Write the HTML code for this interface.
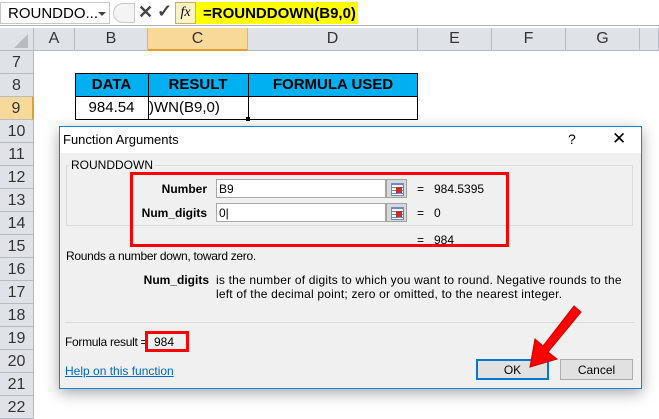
<!DOCTYPE html>
<html><head><meta charset="utf-8"><style>
*{margin:0;padding:0;box-sizing:border-box}
body{width:659px;height:419px;overflow:hidden;background:#fff;font-family:"Liberation Sans",sans-serif;position:relative}
.a{position:absolute}
.hdr{background:#dfe3e8;border-right:1px solid #b7bcc2;border-bottom:1px solid #b7bcc2;color:#333;font-size:16px;text-align:center}
.t{font-size:12px;color:#000;white-space:nowrap}
.ib{background:#fff;border:1px solid #a8a8a8}
.pk{background:#d8d8d8;border:1px solid #a0a0a0}
.pk:after{content:"";position:absolute;left:4px;top:3px;width:11px;height:11px;background:repeating-linear-gradient(#6a8cc0 0 1px,#fff 1px 3px);border:1px solid #6a8cc0}
.pk:before{content:"";position:absolute;left:9px;top:7px;width:6px;height:6px;background:#d03020;z-index:1}
</style></head><body>
<div class="a" style="left:0;top:0;width:659px;height:26px;background:#fff;border-bottom:1px solid #b0b0b0"></div>
<div class="a" style="left:0;top:2px;width:110px;height:22px;border:1px solid #c8c8c8;font-size:15px;padding:2px 0 0 7px">ROUNDDO...</div>
<div class="a" style="left:98px;top:12px;width:0;height:0;border-left:4px solid transparent;border-right:4px solid transparent;border-top:4px solid #444"></div>
<div class="a" style="left:113px;top:3px;width:22px;height:20px;border:1px solid #c8c8c8;border-radius:10px 0 0 10px;background:#f4f4f4"></div>
<div class="a" style="left:138px;top:2px;font-size:18px;color:#444;font-weight:bold">✕</div>
<div class="a" style="left:157px;top:1px;font-size:18px;color:#444;font-weight:bold">✓</div>
<div class="a" style="left:175px;top:2px;width:21px;height:22px;background:#fbf3c6;border:1px solid #c8b060;font-family:'Liberation Serif',serif;font-style:italic;font-size:14px;text-align:center;line-height:20px">fx</div>
<div class="a" style="left:196px;top:2px;width:162px;height:22px;background:#ffff00;font-size:15px;font-weight:bold;padding:3px 0 0 7px;white-space:nowrap">=ROUNDDOWN(B9,0)</div>
<div class="a hdr" style="left:0;top:28px;width:34px;height:23px"></div>
<div class="a" style="left:14px;top:34px;width:0;height:0;border-left:14px solid transparent;border-bottom:14px solid #b8bcc0"></div>
<div class="a hdr" style="left:34px;top:28px;width:41px;height:23px;line-height:22px">A</div>
<div class="a hdr" style="left:75px;top:28px;width:73px;height:23px;line-height:22px">B</div>
<div class="a hdr" style="left:148px;top:28px;width:100px;height:23px;line-height:22px;background:#f9d99a;border-bottom:2px solid #e0a030">C</div>
<div class="a hdr" style="left:248px;top:28px;width:170px;height:23px;line-height:22px">D</div>
<div class="a hdr" style="left:418px;top:28px;width:74px;height:23px;line-height:22px">E</div>
<div class="a hdr" style="left:492px;top:28px;width:74px;height:23px;line-height:22px">F</div>
<div class="a hdr" style="left:566px;top:28px;width:74px;height:23px;line-height:22px">G</div>
<div class="a hdr" style="left:640px;top:28px;width:19px;height:23px"></div>
<div class="a hdr" style="left:0;top:51px;width:34px;height:23px;line-height:23px">7</div>
<div class="a hdr" style="left:0;top:74px;width:34px;height:23px;line-height:23px">8</div>
<div class="a hdr" style="left:0;top:97px;width:34px;height:23px;line-height:23px;background:#f9d99a;border-right:2px solid #e0a030">9</div>
<div class="a hdr" style="left:0;top:120px;width:34px;height:23px;line-height:23px">10</div>
<div class="a hdr" style="left:0;top:143px;width:34px;height:23px;line-height:23px">11</div>
<div class="a hdr" style="left:0;top:166px;width:34px;height:23px;line-height:23px">12</div>
<div class="a hdr" style="left:0;top:189px;width:34px;height:23px;line-height:23px">13</div>
<div class="a hdr" style="left:0;top:212px;width:34px;height:23px;line-height:23px">14</div>
<div class="a hdr" style="left:0;top:235px;width:34px;height:23px;line-height:23px">15</div>
<div class="a hdr" style="left:0;top:258px;width:34px;height:23px;line-height:23px">16</div>
<div class="a hdr" style="left:0;top:281px;width:34px;height:23px;line-height:23px">17</div>
<div class="a hdr" style="left:0;top:304px;width:34px;height:23px;line-height:23px">18</div>
<div class="a hdr" style="left:0;top:327px;width:34px;height:23px;line-height:23px">19</div>
<div class="a hdr" style="left:0;top:350px;width:34px;height:23px;line-height:23px">20</div>
<div class="a hdr" style="left:0;top:373px;width:34px;height:23px;line-height:23px">21</div>
<div class="a hdr" style="left:0;top:396px;width:34px;height:23px;line-height:23px">22</div>
<div class="a" style="left:75px;top:73px;width:343px;height:47px;border:1px solid #000"></div>
<div class="a" style="left:75px;top:73px;width:343px;height:24px;background:#00b0f0;border:1px solid #000"></div>
<div class="a" style="left:148px;top:73px;width:1px;height:47px;background:#000"></div>
<div class="a" style="left:248px;top:73px;width:1px;height:47px;background:#000"></div>
<div class="a" style="left:75px;top:76px;width:73px;text-align:center;font-weight:bold;font-size:15px">DATA</div>
<div class="a" style="left:148px;top:76px;width:100px;text-align:center;font-weight:bold;font-size:15px">RESULT</div>
<div class="a" style="left:248px;top:76px;width:170px;text-align:center;font-weight:bold;font-size:15px">FORMULA USED</div>
<div class="a" style="left:75px;top:99px;width:73px;text-align:center;font-size:15px">984.54</div>
<div class="a" style="left:149px;top:99px;font-size:15px">)WN(B9,0)</div>
<div class="a" style="left:246px;top:117px;width:4px;height:4px;background:#000"></div>
<div class="a" style="left:59px;top:126px;width:583px;height:263px;background:#f0f0f0;border:1px solid #1883d7;box-shadow:0 4px 14px rgba(0,0,0,.35)"></div>
<div class="a" style="left:60px;top:127px;width:581px;height:26px;background:#fff"></div>
<div class="a t" style="left:63px;top:132px;font-size:13px">Function Arguments</div>
<div class="a t" style="left:568px;top:131px;font-size:14px">?</div>
<div class="a t" style="left:612px;top:129px;font-size:17px">✕</div>
<div class="a" style="left:66px;top:165px;width:567px;height:61px;border:1px solid #dadada"></div>
<div class="a t" style="left:69px;top:158px;background:#f0f0f0;padding:0 2px">ROUNDDOWN</div>
<div class="a" style="left:130px;top:172px;width:379px;height:75px;border:3px solid #f00"></div>
<div class="a t" style="left:150px;top:182px;width:57px;text-align:right;font-weight:bold">Number</div>
<div class="a ib" style="left:216px;top:179px;width:170px;height:19px"></div>
<div class="a t" style="left:219px;top:182px">B9</div>
<div class="a pk" style="left:386px;top:179px;width:21px;height:19px"></div>
<div class="a t" style="left:120px;top:206px;width:87px;text-align:right;font-weight:bold">Num_digits</div>
<div class="a ib" style="left:216px;top:203px;width:170px;height:19px"></div>
<div class="a t" style="left:219px;top:206px">0|</div>
<div class="a pk" style="left:386px;top:203px;width:21px;height:19px"></div>
<div class="a t" style="left:417px;top:182px">=&nbsp;&nbsp; 984.5395</div>
<div class="a t" style="left:417px;top:206px">=&nbsp;&nbsp; 0</div>
<div class="a t" style="left:417px;top:233px">=&nbsp;&nbsp; 984</div>
<div class="a t" style="left:66px;top:249px;letter-spacing:-0.3px">Rounds a number down, toward zero.</div>
<div class="a t" style="left:140px;top:273px;width:69px;text-align:right;font-weight:bold">Num_digits</div>
<div class="a t" style="left:216px;top:273px;line-height:14px;letter-spacing:0.2px">is the number of digits to which you want to round. Negative rounds to the<br>left of the decimal point; zero or omitted, to the nearest integer.</div>
<div class="a" style="left:65px;top:322px;width:570px;height:1px;background:#dadada"></div>
<div class="a t" style="left:65px;top:335px;letter-spacing:-0.3px">Formula result =</div>
<div class="a" style="left:145px;top:331px;width:44px;height:21px;border:3px solid #f00"></div>
<div class="a t" style="left:154px;top:335px">984</div>
<div class="a t" style="left:65px;top:364px;color:#0066cc;text-decoration:underline">Help on this function</div>
<div class="a" style="left:476px;top:359px;width:73px;height:21px;background:#e1e1e1;border:2px solid #0078d7"></div>
<div class="a t" style="left:476px;top:363px;width:73px;text-align:center">OK</div>
<div class="a" style="left:560px;top:359px;width:73px;height:21px;background:#e1e1e1;border:1px solid #adadad"></div>
<div class="a t" style="left:560px;top:363px;width:73px;text-align:center">Cancel</div>
<svg class="a" style="left:0;top:0" width="659" height="419"><g fill="#f00" stroke="#c00" stroke-width="1">
<path d="M574 306 L581 312 L548 352 L557 359 L530 367 L535 339 L543 346 Z"/></g></svg>
</body></html>
